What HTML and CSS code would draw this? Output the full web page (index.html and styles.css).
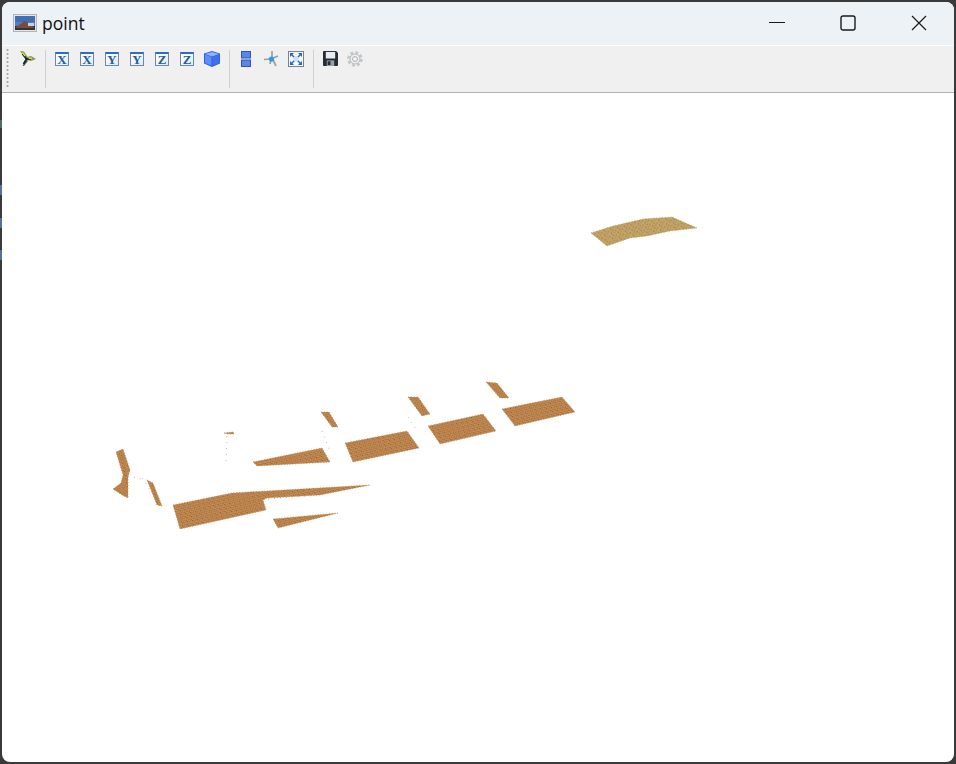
FILE: index.html
```html
<!DOCTYPE html>
<html lang="en">
<head>
  <meta charset="UTF-8">
  <title>point</title>
  <link rel="stylesheet" href="styles.css">
</head>
<body>

  <div class="window">
    <header class="titlebar">
      <svg class="app-icon" width="24" height="18" viewBox="0 0 24 18">
        <rect x="0.5" y="0.5" width="23" height="17" fill="#e6e6e6" stroke="#b4b4b4"/>
        <rect x="2" y="2" width="20" height="14" fill="#4f7fc0"/>
        <rect x="2" y="2" width="20" height="6" fill="#3f6fb4"/>
        <rect x="2" y="12" width="20" height="4" fill="#2c3440"/>
        <path d="M3 13 L9 9 L11 7 L14 8 L17 11 L21 13 L21 14 L3 14 Z" fill="#7a4a3c"/>
        <rect x="15" y="9" width="6" height="3" fill="#c9d2da"/>
      </svg>
      <span class="title">point</span>
      <div class="controls">
        <button class="ctrl">
          <svg width="16" height="16" viewBox="0 0 16 16"><path d="M0 7.5 H16" stroke="#1a1a1a" stroke-width="1.2"/></svg>
        </button>
        <button class="ctrl">
          <svg width="16" height="16" viewBox="0 0 16 16"><rect x="1" y="1" width="14" height="14" rx="2" fill="none" stroke="#1a1a1a" stroke-width="1.4"/></svg>
        </button>
        <button class="ctrl">
          <svg width="16" height="16" viewBox="0 0 16 16"><path d="M1 1 L15 15 M15 1 L1 15" stroke="#1a1a1a" stroke-width="1.2"/></svg>
        </button>
      </div>
    </header>

    <nav class="toolbar">
      <div class="grip"></div>

      <div class="tool tool-first">
        <svg width="16" height="16" viewBox="0 0 16 16">
          <path d="M0 0 L4 0.5 L7.5 6 L6 8 Z" fill="#7f9a44"/>
          <path d="M7 6 L11 5 L16 8 L11 10 L7 9 Z" fill="#7f9a5c"/>
          <path d="M6 8 L8 10 L4 15 L2.5 15 Z" fill="#4f7044"/>
          <path d="M2.5 3 L6.5 8 L11 7.6 M6.5 8 L3.5 13" fill="none" stroke="#10202e" stroke-width="1.7"/>
          <path d="M2.5 1.5 L5 5 M8.5 7 L12 7.5" stroke="#e6d83a" stroke-width="1.3"/>
        </svg>
      </div>
      <div class="sep"></div>

      <div class="tool"><span class="axis">X</span></div>
      <div class="tool"><span class="axis">X</span></div>
      <div class="tool"><span class="axis">Y</span></div>
      <div class="tool"><span class="axis">Y</span></div>
      <div class="tool"><span class="axis">Z</span></div>
      <div class="tool"><span class="axis">Z</span></div>
      <div class="tool">
        <svg width="16" height="16" viewBox="0 0 16 16">
          <path d="M8 0 L16 2.5 V12.5 L8 16 L0 12.5 V2.5 Z" fill="#2f5fe0"/>
          <path d="M8 1 L15 3 L8 5.5 L1 3 Z" fill="#8fb4ff"/>
          <path d="M1 3.5 L7.5 6 V14.5 L1 12 Z" fill="#5f8cf8"/>
          <path d="M8.5 6 L15 3.5 V12 L8.5 14.5 Z" fill="#3f70f0"/>
        </svg>
      </div>
      <div class="sep"></div>

      <div class="tool">
        <svg width="10" height="16" viewBox="0 0 10 16">
          <rect x="0.5" y="0.5" width="9" height="6.5" fill="#5a86ea" stroke="#2f55b8"/>
          <rect x="0.5" y="9" width="9" height="6.5" fill="#5a86ea" stroke="#2f55b8"/>
        </svg>
      </div>
      <div class="tool">
        <svg width="15" height="16" viewBox="0 0 15 16">
          <path d="M8 0 L8 6 M0 8.5 L6 8 M9 9 L12 15 M9 7 L14 5 M6 13 L7 9" stroke="#9aa0a8" stroke-width="1.7" fill="none"/>
          <circle cx="7.5" cy="8" r="2.6" fill="#2e9be8"/>
        </svg>
      </div>
      <div class="tool">
        <svg width="16" height="16" viewBox="0 0 16 16">
          <rect x="0.5" y="0.5" width="15" height="15" fill="#f2f6fa" stroke="#7a8290"/>
          <rect x="5" y="5" width="6" height="6" fill="#cfe4f8"/>
          <path d="M2 2 H6 L2 6 Z M14 2 V6 L10 2 Z M2 14 V10 L6 14 Z M14 14 H10 L14 10 Z" fill="#2a68b8"/>
          <path d="M3 3 L6 6 M13 3 L10 6 M3 13 L6 10 M13 13 L10 10" stroke="#2a68b8" stroke-width="1.4"/>
        </svg>
      </div>
      <div class="sep"></div>

      <div class="tool">
        <svg width="15" height="15" viewBox="0 0 16 16">
          <path d="M0 1 Q0 0 1 0 H14 L16 2 V15 Q16 16 15 16 H1 Q0 16 0 15 Z" fill="#262c36"/>
          <rect x="3" y="1" width="10" height="7" fill="#e8ecf0"/>
          <rect x="4" y="10" width="8" height="6" fill="#9aa0a6"/>
          <rect x="5" y="11" width="3" height="4" fill="#262c36"/>
        </svg>
      </div>
      <div class="tool">
        <svg width="16" height="16" viewBox="0 0 16 16">
          <circle cx="8" cy="8" r="6.6" fill="none" stroke="#c4c6ca" stroke-width="2.4" stroke-dasharray="3 2.2"/>
          <circle cx="8" cy="8" r="5" fill="#eeeff0" stroke="#b4b6ba"/>
          <circle cx="8" cy="8" r="2.4" fill="#f8f8f8" stroke="#a8aaae"/>
        </svg>
      </div>
    </nav>

    <!-- point cloud view, coordinates are window pixels -->
    <main class="view">
      <svg class="cloud" viewBox="2 93 952 669" preserveAspectRatio="xMinYMin meet">
        <defs>
          <pattern id="dots" width="5" height="4.2" patternUnits="userSpaceOnUse" patternTransform="rotate(-13)">
            <rect width="5" height="4.2" fill="#c48c54"/>
            <rect x="0" y="0" width="1.2" height="1.1" fill="#8f5c30"/>
            <rect x="2.5" y="0.3" width="1.2" height="1" fill="#a06c3c"/>
            <rect x="1.2" y="2.2" width="1.2" height="1" fill="#96623a"/>
            <rect x="3.7" y="2.5" width="1.2" height="1.1" fill="#8f5c30"/>
          </pattern>
          <pattern id="sand" width="7" height="5" patternUnits="userSpaceOnUse" patternTransform="rotate(-10)">
            <rect width="7" height="5" fill="#c4a468"/>
            <rect x="1" y="0.6" width="1.3" height="1.1" fill="#8f7440"/>
            <rect x="4" y="0.2" width="1.2" height="1" fill="#a48a50"/>
            <rect x="2.6" y="2.8" width="1.3" height="1.1" fill="#9a7e46"/>
            <rect x="5.6" y="3.4" width="1.2" height="1" fill="#8f7440"/>
          </pattern>
        </defs>

        <polygon class="patch-far" points="591,233 613,226 643,219 672,217 697,228 670,231 647,236 630,238 607,246"/>

        <g class="patch">
          <polygon points="486,382 497,383 509,398 500,398"/>
          <polygon points="502,409 562,397 575,412 515,426"/>
          <polygon points="408,397 418,397 430,414 422,416"/>
          <polygon points="428,426 483,414 496,431 440,444"/>
          <polygon points="321,412 329,412 338,427 332,427"/>
          <polygon points="345,443 407,431 419,448 353,462"/>
          <polygon points="253,462 322,448 330,462 257,466"/>
          <polygon points="173,505 232,493 370,485 320,495 267,498 263,500 266,510 180,529"/>
          <polygon points="273,519 338,513 278,528"/>
          <polygon points="116,452 123,449 130,470 128,477 128,498 122,495 113,489 121,483 123,475"/>
          <polygon points="147,480 153,483 162,506 157,505"/>
          <polygon points="224,433 233,432 234,434 228,434"/>
        </g>

        <g class="scatter">
          <path d="M128 476 L146 480"/>
          <path d="M142 478 L160 505"/>
          <path d="M227 436 L226 465"/>
          <path d="M322 431 L329 449"/>
          <path d="M408 417 L418 432"/>
          <path d="M268 499 L320 495"/>
          <path d="M322 450 L330 462"/>
        </g>
      </svg>
    </main>
  </div>

</body>
</html>
```

FILE: styles.css
```css
* {
  box-sizing: border-box;
}
html, body {
  height: 100%;
}
body {
  margin: 0;
  padding: 2px;
  background-color: #3a3a3a;
  background-image: linear-gradient(180deg,
    transparent 120px, #4f6f5c 120px, #4f6f5c 128px, transparent 128px,
    transparent 185px, #54709c 185px, #54709c 195px, transparent 195px,
    transparent 218px, #54709c 218px, #54709c 228px, transparent 228px,
    transparent 250px, #54709c 250px, #54709c 260px, transparent 260px);
  background-size: 2px 100%;
  background-repeat: no-repeat;
  font-family: "Open Sans", "Noto Sans", sans-serif;
  overflow: hidden;
}
.window {
  height: 100%;
  display: flex;
  flex-direction: column;
  background: white;
  border-radius: 8px;
  overflow: hidden;
}
.titlebar {
  height: 44px;
  flex: none;
  display: flex;
  align-items: center;
  padding: 0 0 2px 11px;
  background: #edf2f7;
  border-bottom: 1px solid #fbfcfd;
}
.app-icon {
  margin-right: 5px;
}
.title {
  font-size: 17.5px;
  color: #111;
}
.controls {
  margin-left: auto;
  display: flex;
}
.ctrl {
  width: 71px;
  height: 30px;
  padding: 0;
  border: none;
  background: transparent;
  display: flex;
  align-items: center;
  justify-content: center;
}
.toolbar {
  height: 47px;
  flex: none;
  display: flex;
  padding-top: 4px;
  background: #f0f0f0;
  border-bottom: 1px solid #b4b4b4;
}
.grip {
  width: 3px;
  height: 40px;
  margin: -2px 7px 0 4px;
  background-image: radial-gradient(circle, #a8a8a8 1px, transparent 1.2px);
  background-size: 3px 4px;
}
.tool {
  width: 24px;
  margin-right: 1px;
  height: 18px;
  padding-top: 1px;
  display: flex;
  justify-content: center;
  align-items: flex-start;
}
.tool-first {
  margin-right: 0;
}
.axis {
  width: 14px;
  height: 14px;
  margin-top: 1px;
  border: 1px solid #6f88a8;
  border-top: 2px solid #2f6cc0;
  background: linear-gradient(135deg, #ffffff, #dcecf8);
  font-family: "Liberation Serif", serif;
  font-weight: bold;
  font-size: 13px;
  line-height: 12px;
  text-align: center;
  color: #2a5a9c;
}
.sep {
  width: 1px;
  height: 38px;
  margin: 0 4px;
  background: #d0d0d0;
}
.tool-first + .sep {
  margin-left: 5px;
}
.view {
  flex: 1;
  min-height: 0;
}
.cloud {
  display: block;
  width: 100%;
  height: 100%;
}
.patch polygon {
  fill: url(#dots);
  stroke: #c48c54;
  stroke-width: 0.8;
  stroke-dasharray: 1.2 1.6;
}
.patch-far {
  fill: url(#sand);
  stroke: #c4a468;
  stroke-width: 0.8;
  stroke-dasharray: 1.2 1.6;
}
.scatter path {
  fill: none;
  stroke: #b89878;
  stroke-width: 0.7;
  stroke-dasharray: 1 5;
}
```
